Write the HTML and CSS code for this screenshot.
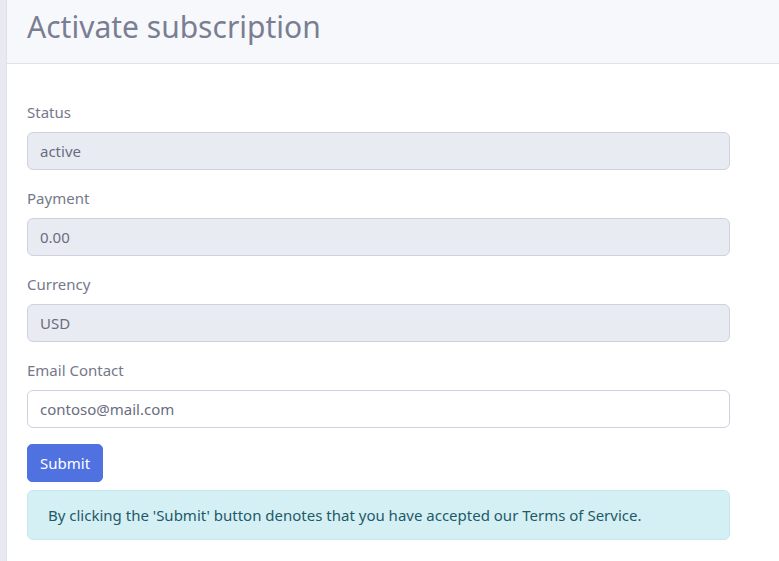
FILE: index.html
```html
<!DOCTYPE html>
<html>
<head>
<meta charset="utf-8">
<link rel="stylesheet" href="styles.css">
</head>
<body>
<div class="page">
  <div class="strip"></div>
  <div class="card">
    <div class="card-header">
      <h1 class="title">Activate subscription</h1>
    </div>
    <form class="card-body">
      <div class="field">
        <label class="label">Status</label>
        <input class="input" type="text" value="active" disabled>
      </div>
      <div class="field">
        <label class="label">Payment</label>
        <input class="input" type="text" value="0.00" disabled>
      </div>
      <div class="field">
        <label class="label">Currency</label>
        <input class="input" type="text" value="USD" disabled>
      </div>
      <div class="field">
        <label class="label">Email Contact</label>
        <input class="input editable" type="text" value="contoso@mail.com">
      </div>
      <div class="actions">
        <button class="btn" type="button">Submit</button>
      </div>
      <div class="alert">By clicking the 'Submit' button denotes that you have accepted our Terms of Service.</div>
    </form>
  </div>
</div>
</body>
</html>
```

FILE: styles.css
```css
* { box-sizing: border-box; }
html, body { margin: 0; padding: 0; background: #ffffff; }
body {
  font-family: "Noto Sans", "Open Sans", sans-serif;
  color: #6e7184;
  overflow: hidden;
}
.page {
  display: flex;
  height: 561px;
}
.strip {
  width: 7px;
  flex: none;
  background: #e9eaf1;
  border-right: 1px solid #dfe0ea;
}
.card {
  flex: 1;
  background: #ffffff;
}
.card-header {
  height: 64px;
  background: #f7f8fc;
  border-bottom: 1px solid #dfe1ec;
  padding: 0 20px;
  display: flex;
  align-items: flex-start;
}
.title {
  margin: 0;
  margin-top: 7px;
  font-weight: 400;
  font-size: 30px;
  line-height: 40px;
  color: #7a7e92;
}
.card-body {
  padding: 36px 49px 0 20px;
  display: flex;
  flex-direction: column;
}
.field {
  display: flex;
  flex-direction: column;
  margin-bottom: 16px;
}
.label {
  font-size: 15px;
  line-height: 24px;
  color: #75788a;
  margin-bottom: 8px;
}
.input {
  height: 38px;
  width: 100%;
  border: 1px solid #cfd1df;
  border-radius: 6px;
  background: #e9ebf2;
  padding: 0 12px;
  font-family: inherit;
  font-size: 15px;
  color: #6a6d80;
  -webkit-text-fill-color: #6a6d80;
  opacity: 1;
}
.input.editable {
  background: #ffffff;
}
.actions {
  display: flex;
  margin-bottom: 8px;
}
.btn {
  height: 38px;
  padding: 0 12px;
  background: #5072e0;
  border: 1px solid #5072e0;
  border-radius: 5px;
  color: #ffffff;
  font-family: inherit;
  font-size: 15px;
}
.alert {
  height: 50px;
  background: #d5f0f4;
  border: 1px solid #c3e8ee;
  border-radius: 6px;
  padding: 0 20px;
  display: flex;
  align-items: center;
  font-size: 15px;
  color: #1e5a68;
}
```
